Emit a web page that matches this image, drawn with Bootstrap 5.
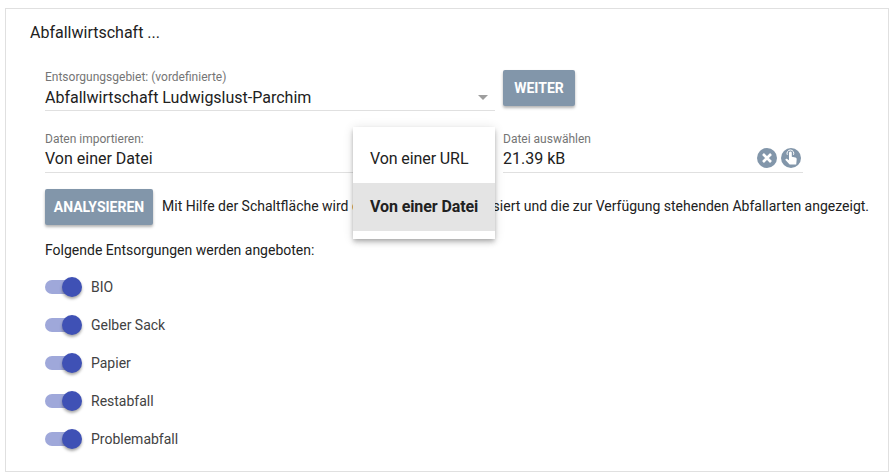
<!doctype html>
<html lang="de"><head><meta charset="utf-8">
<title>Abfallwirtschaft</title>
<link href="https://cdn.jsdelivr.net/npm/bootstrap@5.3.0/dist/css/bootstrap.min.css" rel="stylesheet">
<style>
html,body{height:100%;overflow:hidden}
body{font-family:Roboto,"Liberation Sans",sans-serif;font-size:14px;color:#212121;background:#fff;padding:8px 1px 0 5px}
.shell{border:1px solid #e0e0e0;height:464px;padding:14px 0 0 24px;border-radius:0;position:relative}
.shell-title{font-size:16px;line-height:20px;color:#212121;margin:0 0 27px}
.form-area{padding-left:15px}
.mat-row{display:flex;gap:8px}
.fld{border-bottom:1px solid #e0e0e0;height:41px;position:relative}
.fld-a{width:450px}
.fld-c{width:300px}
.fld-lab{display:block;font-size:12px;line-height:14px;color:#757575}
.fld-val{display:block;font-size:16px;line-height:20px;color:#212121;margin-top:3px}
.mat-btn{background:#8296aa;color:#fff;border:0;border-radius:2px;font-size:14px;font-weight:700;line-height:36px;height:36px;padding:0;box-shadow:0 2px 3px rgba(0,0,0,.3)}
.mat-btn:hover{background:#8296aa;color:#fff}
.btn-next{width:72px}
.btn-scan{width:108px;flex:none}
.caret{position:absolute;right:7px;top:25px;width:0;height:0;border-left:5px solid transparent;border-right:5px solid transparent;border-top:5px solid #9e9e9e}
.row-one{align-items:flex-start}
.row-one .fld-val{margin-top:4px;line-height:19px}
.row-two{margin-top:21px;position:relative}
.ico-pair{position:absolute;right:2px;top:16px;display:flex;gap:4px}
.ico-pair svg{display:block}
.row-three{margin-top:16px;align-items:center;gap:9px}
.row-three span{font-size:14px;color:#212121;white-space:nowrap;position:relative;top:-1px}
.offer{font-size:14px;line-height:20px;margin:15px 0 0}
.tog-list{margin-top:17px;display:flex;flex-direction:column;gap:18px}
.tog-row{display:flex;align-items:center;height:20px;gap:10px;font-size:14px;color:#424242}
.tog{display:block;width:36px;height:14px;border-radius:7px;background:#9fa8da;position:relative;flex:none}
.tog::after{content:"";position:absolute;right:-1px;top:-3px;width:20px;height:20px;border-radius:50%;background:#3f51b5;box-shadow:0 2px 3px rgba(0,0,0,.35)}
.pop-menu{position:absolute;left:347px;top:118px;width:142px;padding:8px 0;background:#fff;box-shadow:0 2px 4px -1px rgba(0,0,0,.2),0 4px 5px rgba(0,0,0,.14),0 1px 10px rgba(0,0,0,.12);z-index:5}
.pop-item{height:48px;line-height:48px;padding-left:17px;font-size:16px;color:#212121;white-space:nowrap;letter-spacing:-.1px}
.pop-item.sel{background:#e4e4e4;font-weight:700}
</style></head>
<body>
<div class="shell">
  <div class="shell-title">Abfallwirtschaft ...</div>
  <div class="form-area">
    <div class="mat-row row-one">
      <div class="fld fld-a"><span class="fld-lab">Entsorgungsgebiet: (vordefinierte)</span><span class="fld-val">Abfallwirtschaft Ludwigslust-Parchim</span><i class="caret"></i></div>
      <button class="btn mat-btn btn-next" type="button">WEITER</button>
    </div>
    <div class="mat-row row-two">
      <div class="fld fld-a"><span class="fld-lab">Daten importieren:</span><span class="fld-val">Von einer Datei</span></div>
      <div class="fld fld-c"><span class="fld-lab">Datei auswählen</span><span class="fld-val">21.39 kB</span>
        <div class="ico-pair">
          <svg width="20" height="20" viewBox="0 0 20 20"><circle cx="10" cy="10" r="10" fill="#8296aa"/><path d="M6 6l8 8M14 6l-8 8" stroke="#fff" stroke-width="2.6"/></svg>
          <svg width="20" height="20" viewBox="0 0 20 20"><circle cx="10" cy="10" r="10" fill="#8296aa"/><path d="M8 4.800a1.400 1.400 0 0 1 2.800 0V8.800l3.600.7c.9.2 1.400.9 1.300 1.800l-.5 5.200H8.600L4.700 12.200c-.4-.5-.3-1 .1-1.300.4-.3 1-.3 1.400 0l1.800 1.300z" fill="#fff"/><path d="M6.300 6.800a3.400 3.400 0 1 1 6.200 0" fill="none" stroke="#fff"/></svg>
        </div>
      </div>
    </div>
    <div class="mat-row row-three">
      <button class="btn mat-btn btn-scan" type="button">ANALYSIEREN</button>
      <span>Mit Hilfe der Schaltfläche wird die externe Datei analysiert und die zur Verfügung stehenden Abfallarten angezeigt.</span>
    </div>
    <p class="offer">Folgende Entsorgungen werden angeboten:</p>
    <div class="tog-list">
      <div class="tog-row"><i class="tog"></i>BIO</div>
      <div class="tog-row"><i class="tog"></i>Gelber Sack</div>
      <div class="tog-row"><i class="tog"></i>Papier</div>
      <div class="tog-row"><i class="tog"></i>Restabfall</div>
      <div class="tog-row"><i class="tog"></i>Problemabfall</div>
    </div>
  </div>
  <div class="pop-menu">
    <div class="pop-item">Von einer URL</div>
    <div class="pop-item sel">Von einer Datei</div>
  </div>
</div>
<script src="https://cdn.jsdelivr.net/npm/bootstrap@5.3.0/dist/js/bootstrap.bundle.min.js"></script>
</body></html>
